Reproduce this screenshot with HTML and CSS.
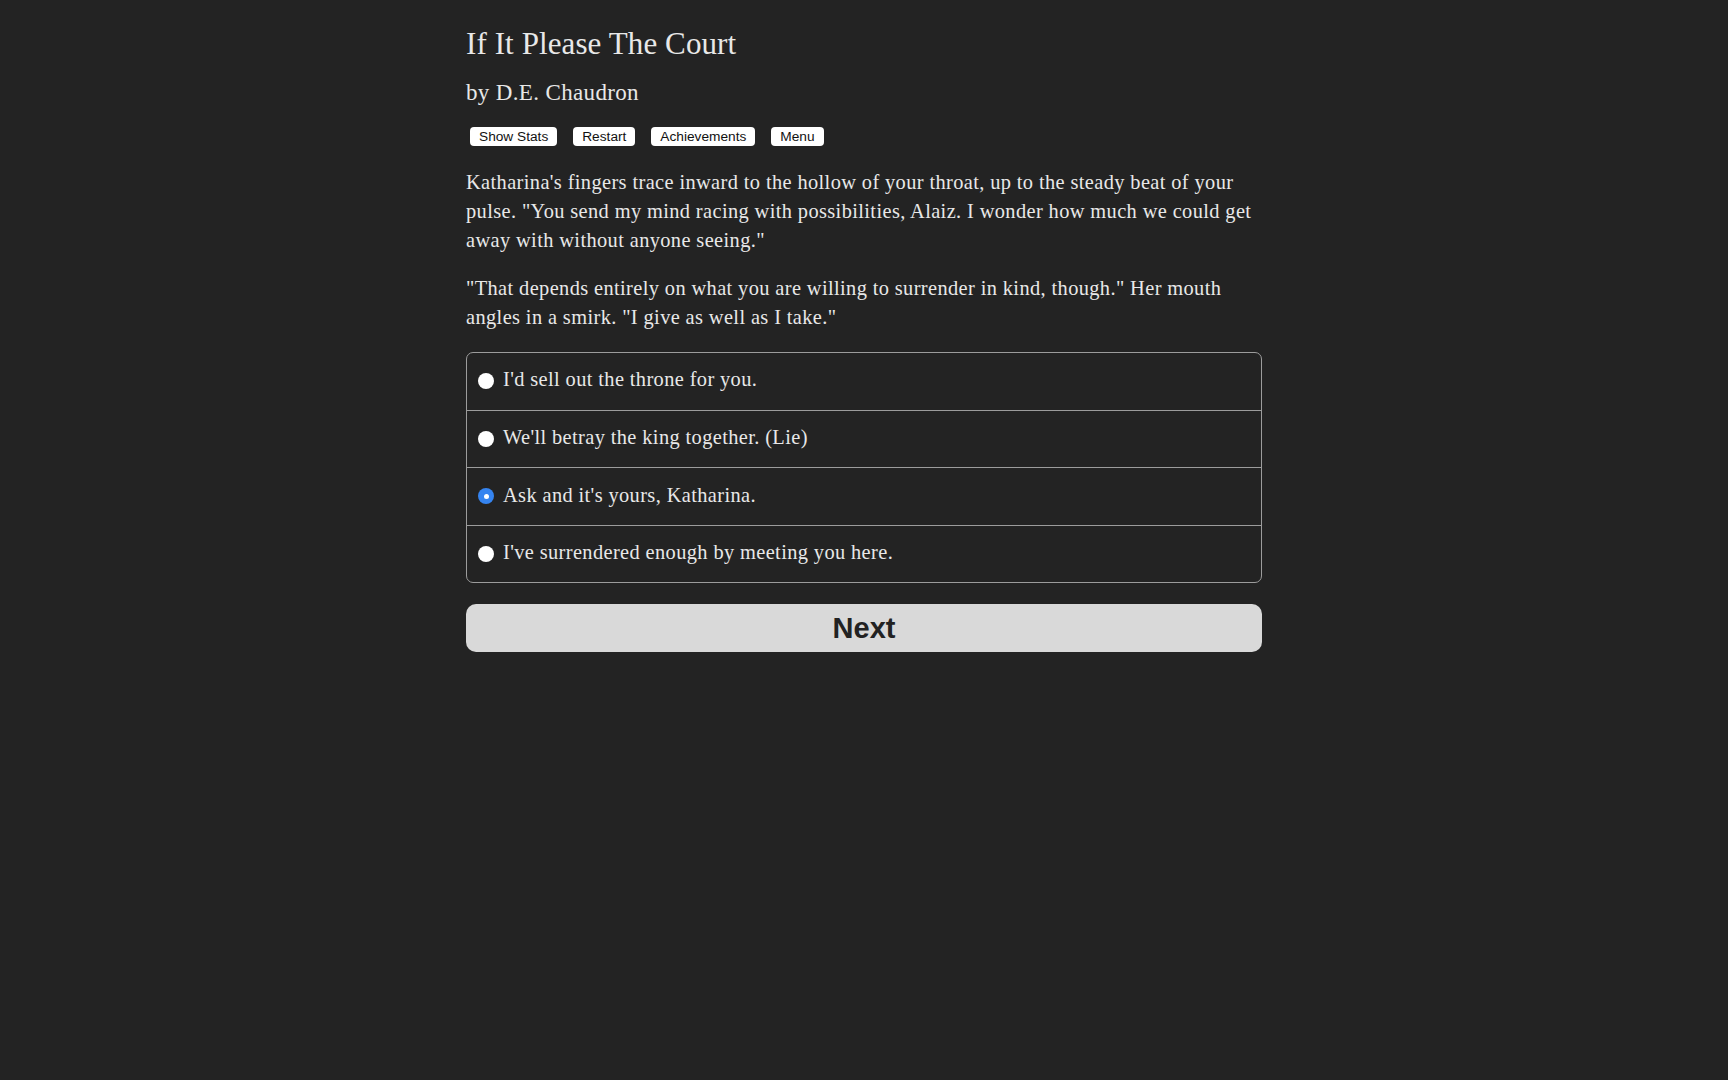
FILE: index.html
```html
<!DOCTYPE html>
<html lang="en">
<head>
<meta charset="utf-8">
<title>If It Please The Court</title>
<link rel="stylesheet" href="styles.css">
</head>
<body>
<main class="page">
  <h1 class="title">If It Please The Court</h1>
  <h2 class="author">by D.E. Chaudron</h2>
  <div class="toolbar">
    <button class="tool">Show Stats</button>
    <button class="tool">Restart</button>
    <button class="tool">Achievements</button>
    <button class="tool">Menu</button>
  </div>
  <p class="story">Katharina's fingers trace inward to the hollow of your throat, up to the steady beat of your pulse. "You send my mind racing with possibilities, Alaiz. I wonder how much we could get away with without anyone seeing."</p>
  <p class="story">"That depends entirely on what you are willing to surrender in kind, though." Her mouth angles in a smirk. "I give as well as I take."</p>
  <div class="choices">
    <div class="choice"><span class="radio"></span><span class="label">I'd sell out the throne for you.</span></div>
    <div class="choice"><span class="radio"></span><span class="label">We'll betray the king together. (Lie)</span></div>
    <div class="choice"><span class="radio checked"></span><span class="label">Ask and it's yours, Katharina.</span></div>
    <div class="choice"><span class="radio"></span><span class="label">I've surrendered enough by meeting you here.</span></div>
  </div>
  <button class="next">Next</button>
</main>
</body>
</html>
```

FILE: styles.css
```css
html, body {
  margin: 0;
  padding: 0;
  background: #232323;
}

body {
  color: #e8e8e8;
  font-family: "Liberation Serif", "Times New Roman", serif;
  min-height: 1080px;
}

.page {
  width: 796px;
  margin: 0 auto;
  padding-top: 26px;
}

.title {
  margin: 0;
  font-size: 31px;
  letter-spacing: 0.1px;
  line-height: 36px;
  font-weight: normal;
}

.author {
  margin: 17.8px 0 0;
  font-size: 23px;
  letter-spacing: 0.35px;
  line-height: 26.4px;
  font-weight: normal;
}

.toolbar {
  display: flex;
  gap: 16px;
  margin-top: 20.5px;
  padding-left: 4px;
}

.tool {
  font-family: "Liberation Sans", Arial, sans-serif;
  font-size: 13.7px;
  height: 19px;
  line-height: 19px;
  padding: 0 9px;
  border: none;
  border-radius: 4px;
  background: #ffffff;
  color: #111;
}

.story {
  margin: 22.3px 0 0;
  font-size: 20.4px;
  letter-spacing: 0.38px;
  line-height: 28.8px;
}

.story + .story {
  margin-top: 20px;
}

.choices {
  margin-top: 20.2px;
  border: 1px solid #9c9c9c;
  border-radius: 7px;
}

.choice {
  display: flex;
  align-items: flex-start;
  padding: 12.2px 10px 15.6px 11px;
  border-top: 1px solid #9c9c9c;
  font-size: 20.4px;
  letter-spacing: 0.38px;
  line-height: 28.8px;
}

.choice:first-child {
  border-top: none;
}

.radio {
  flex: none;
  width: 16px;
  height: 16px;
  border-radius: 50%;
  background: #ffffff;
  margin: 7.8px 9px 0 0;
  box-sizing: border-box;
  display: flex;
  align-items: center;
  justify-content: center;
}

.radio.checked {
  background: #3584f0;
}

.radio.checked::after {
  content: "";
  width: 5px;
  height: 5px;
  border-radius: 50%;
  background: #ffffff;
}

.next {
  display: block;
  width: 100%;
  height: 48px;
  margin-top: 20.6px;
  border: none;
  border-radius: 10px;
  background: #d9d9d9;
  color: #222222;
  font-family: "Liberation Sans", Arial, sans-serif;
  font-weight: bold;
  font-size: 29px;
  padding-top: 2px;
}
```
